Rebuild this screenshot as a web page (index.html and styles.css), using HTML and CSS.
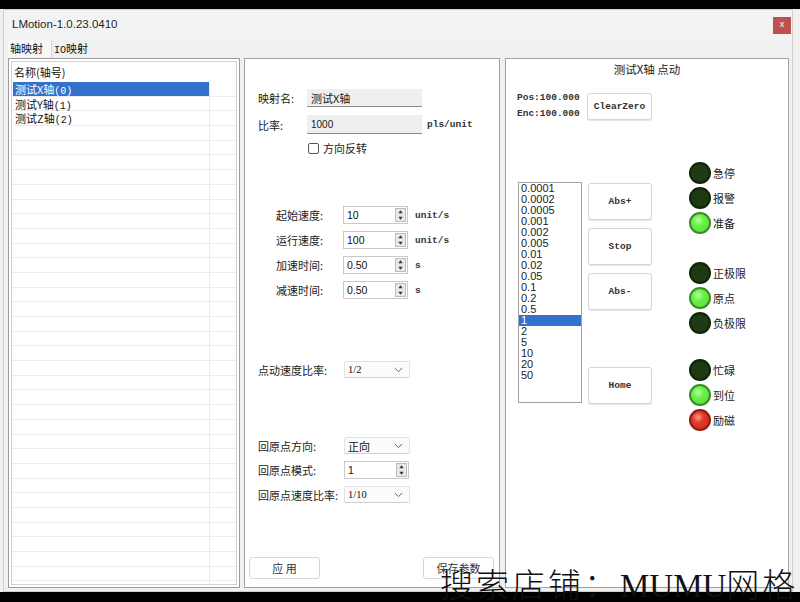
FILE: index.html
```html
<!DOCTYPE html>
<html lang="zh">
<head>
<meta charset="utf-8">
<title>LMotion</title>
<link rel="stylesheet" href="styles.css">
</head>
<body>
<div class="topbar"></div>
<div class="window">
  <div class="frame">
    <div class="titlebar">
      <span class="title">LMotion-1.0.23.0410</span>
      <span class="close">x</span>
    </div>
    <div class="tabs">
      <span class="tab active">轴映射</span>
      <span class="tab"><span class="asc">IO</span>映射</span>
    </div>
    <div class="content">
      <!-- left axis list -->
      <div class="lpanel">
        <div class="lgrid">
          <div class="lhead">名称(轴号)</div>
          <div class="lrow"><div class="c1 sel">测试X轴<span class="asc">(0)</span></div><div class="c2"></div></div>
          <div class="lrow"><div class="c1">测试Y轴<span class="asc">(1)</span></div><div class="c2"></div></div>
          <div class="lrow"><div class="c1">测试Z轴<span class="asc">(2)</span></div><div class="c2"></div></div>
          <div class="lrow"><div class="c1"></div><div class="c2"></div></div>
          <div class="lrow"><div class="c1"></div><div class="c2"></div></div>
          <div class="lrow"><div class="c1"></div><div class="c2"></div></div>
          <div class="lrow"><div class="c1"></div><div class="c2"></div></div>
          <div class="lrow"><div class="c1"></div><div class="c2"></div></div>
          <div class="lrow"><div class="c1"></div><div class="c2"></div></div>
          <div class="lrow"><div class="c1"></div><div class="c2"></div></div>
          <div class="lrow"><div class="c1"></div><div class="c2"></div></div>
          <div class="lrow"><div class="c1"></div><div class="c2"></div></div>
          <div class="lrow"><div class="c1"></div><div class="c2"></div></div>
          <div class="lrow"><div class="c1"></div><div class="c2"></div></div>
          <div class="lrow"><div class="c1"></div><div class="c2"></div></div>
          <div class="lrow"><div class="c1"></div><div class="c2"></div></div>
          <div class="lrow"><div class="c1"></div><div class="c2"></div></div>
          <div class="lrow"><div class="c1"></div><div class="c2"></div></div>
          <div class="lrow"><div class="c1"></div><div class="c2"></div></div>
          <div class="lrow"><div class="c1"></div><div class="c2"></div></div>
          <div class="lrow"><div class="c1"></div><div class="c2"></div></div>
          <div class="lrow"><div class="c1"></div><div class="c2"></div></div>
          <div class="lrow"><div class="c1"></div><div class="c2"></div></div>
          <div class="lrow"><div class="c1"></div><div class="c2"></div></div>
          <div class="lrow"><div class="c1"></div><div class="c2"></div></div>
          <div class="lrow"><div class="c1"></div><div class="c2"></div></div>
          <div class="lrow"><div class="c1"></div><div class="c2"></div></div>
          <div class="lrow"><div class="c1"></div><div class="c2"></div></div>
          <div class="lrow"><div class="c1"></div><div class="c2"></div></div>
          <div class="lrow"><div class="c1"></div><div class="c2"></div></div>
          <div class="lrow"><div class="c1"></div><div class="c2"></div></div>
          <div class="lrow"><div class="c1"></div><div class="c2"></div></div>
          <div class="lrow"><div class="c1"></div><div class="c2"></div></div>
          <div class="lrow"><div class="c1"></div><div class="c2"></div></div>
          <div class="lrow"><div class="c1"></div><div class="c2"></div></div>
        </div>
      </div>

      <!-- middle parameters -->
      <div class="mpanel">
        <div class="frow r-name"><span class="lbl w49">映射名:</span><span class="field">测试X轴</span></div>
        <div class="frow r-ratio"><span class="lbl w49">比率:</span><span class="field num">1000</span><span class="unit">pls/unit</span></div>
        <div class="frow r-check"><span class="cbox"></span><span class="cl">方向反转</span></div>

        <div class="frow r-spd first"><span class="lbl w67">起始速度:</span>
          <span class="spin"><span class="v">10</span><span class="arr"><svg width="9" height="7" viewBox="0 0 9 7"><path d="M4.5 1.5 L7 5 L2 5 Z" fill="#333"/></svg><svg width="9" height="7" viewBox="0 0 9 7"><path d="M2 2 L7 2 L4.5 5.5 Z" fill="#333"/></svg></span></span>
          <span class="unit u2">unit/s</span></div>
        <div class="frow r-spd"><span class="lbl w67">运行速度:</span>
          <span class="spin"><span class="v">100</span><span class="arr"><svg width="9" height="7" viewBox="0 0 9 7"><path d="M4.5 1.5 L7 5 L2 5 Z" fill="#333"/></svg><svg width="9" height="7" viewBox="0 0 9 7"><path d="M2 2 L7 2 L4.5 5.5 Z" fill="#333"/></svg></span></span>
          <span class="unit u2">unit/s</span></div>
        <div class="frow r-spd"><span class="lbl w67">加速时间:</span>
          <span class="spin"><span class="v">0.50</span><span class="arr"><svg width="9" height="7" viewBox="0 0 9 7"><path d="M4.5 1.5 L7 5 L2 5 Z" fill="#333"/></svg><svg width="9" height="7" viewBox="0 0 9 7"><path d="M2 2 L7 2 L4.5 5.5 Z" fill="#333"/></svg></span></span>
          <span class="unit u2">s</span></div>
        <div class="frow r-spd"><span class="lbl w67">减速时间:</span>
          <span class="spin"><span class="v">0.50</span><span class="arr"><svg width="9" height="7" viewBox="0 0 9 7"><path d="M4.5 1.5 L7 5 L2 5 Z" fill="#333"/></svg><svg width="9" height="7" viewBox="0 0 9 7"><path d="M2 2 L7 2 L4.5 5.5 Z" fill="#333"/></svg></span></span>
          <span class="unit u2">s</span></div>

        <div class="frow r-jog"><span class="lbl w86">点动速度比率:</span>
          <span class="combo"><span class="cv">1/2</span><svg width="9" height="6" viewBox="0 0 9 6"><polyline points="0.8,1 4.5,4.6 8.2,1" fill="none" stroke="#666" stroke-width="1"/></svg></span></div>

        <div class="frow r-h1"><span class="lbl w86">回原点方向:</span>
          <span class="combo"><span class="cv cjk">正向</span><svg width="9" height="6" viewBox="0 0 9 6"><polyline points="0.8,1 4.5,4.6 8.2,1" fill="none" stroke="#666" stroke-width="1"/></svg></span></div>
        <div class="frow r-h2"><span class="lbl w86">回原点模式:</span>
          <span class="spin"><span class="v">1</span><span class="arr"><svg width="9" height="7" viewBox="0 0 9 7"><path d="M4.5 1.5 L7 5 L2 5 Z" fill="#333"/></svg><svg width="9" height="7" viewBox="0 0 9 7"><path d="M2 2 L7 2 L4.5 5.5 Z" fill="#333"/></svg></span></span></div>
        <div class="frow r-h3"><span class="lbl w86">回原点速度比率:</span>
          <span class="combo"><span class="cv">1/10</span><svg width="9" height="6" viewBox="0 0 9 6"><polyline points="0.8,1 4.5,4.6 8.2,1" fill="none" stroke="#666" stroke-width="1"/></svg></span></div>

        <div class="btnrow">
          <span class="wbtn">应 用</span>
          <span class="wbtn">保存参数</span>
        </div>
      </div>

      <!-- right jog panel -->
      <div class="rpanel">
        <div class="rtitle">测试X轴 点动</div>
        <div class="posrow">
          <div class="pos"><div>Pos:100.000</div><div>Enc:100.000</div></div>
          <span class="btn clear">ClearZero</span>
        </div>
        <div class="rmain">
          <div class="lst">
            <div>0.0001</div><div>0.0002</div><div>0.0005</div><div>0.001</div><div>0.002</div><div>0.005</div>
            <div>0.01</div><div>0.02</div><div>0.05</div><div>0.1</div><div>0.2</div><div>0.5</div>
            <div class="sel">1</div><div>2</div><div>5</div><div>10</div><div>20</div><div>50</div>
          </div>
          <div class="btncol">
            <span class="btn big">Abs+</span>
            <span class="btn big">Stop</span>
            <span class="btn big">Abs-</span>
            <span class="btn big home">Home</span>
          </div>
          <div class="ledcol">
            <div class="ledgrp">
              <div class="ledrow"><span class="led off"></span><span>急停</span></div>
              <div class="ledrow"><span class="led off"></span><span>报警</span></div>
              <div class="ledrow"><span class="led on"></span><span>准备</span></div>
            </div>
            <div class="ledgrp g2">
              <div class="ledrow"><span class="led off"></span><span>正极限</span></div>
              <div class="ledrow"><span class="led on"></span><span>原点</span></div>
              <div class="ledrow"><span class="led off"></span><span>负极限</span></div>
            </div>
            <div class="ledgrp g3">
              <div class="ledrow"><span class="led off"></span><span>忙碌</span></div>
              <div class="ledrow"><span class="led on"></span><span>到位</span></div>
              <div class="ledrow"><span class="led red"></span><span>励磁</span></div>
            </div>
          </div>
        </div>
      </div>
    </div>
  </div>
</div>
<div class="watermark">搜索店铺：<span class="wl">MUMU</span>网格</div>
</body>
</html>
```

FILE: styles.css
```css
html, body {
  margin: 0;
  padding: 0;
}
body {
  width: 800px;
  height: 602px;
  overflow: hidden;
  background: #000;
  position: relative;
  font-family: "Noto Sans CJK SC", sans-serif;
  font-size: 11px;
  color: #1a1a1a;
}
.topbar {
  height: 9px;
}
.window {
  height: 583px;
  background: #f0f0f0;
  padding-left: 3px;
  box-sizing: border-box;
  width: 800px;
}
.frame {
  box-sizing: border-box;
  width: 790px;
  height: 583px;
  border: 1px solid #cfcfcf;
  display: flex;
  flex-direction: column;
  background: #f0f0f0;
}
.titlebar {
  height: 30px;
  display: flex;
  align-items: flex-start;
  background: #f3f3f3;
}
.title {
  font-family: "Liberation Sans", Arial, sans-serif;
  font-size: 11.5px;
  color: #1e1e1e;
  line-height: 28px;
  padding-left: 8px;
}
.close {
  margin-left: auto;
  margin-top: 7px;
  margin-right: 1px;
  width: 18px;
  height: 17px;
  background: #c0504d;
  color: #fff;
  font-family: "Liberation Sans", Arial, sans-serif;
  font-size: 9px;
  line-height: 15px;
  text-align: center;
}
.tabs {
  height: 18px;
  display: flex;
  padding-left: 4px;
  align-items: stretch;
}
.tab {
  font-size: 11px;
  line-height: 17px;
  padding: 0 8px 0 2px;
  color: #111;
}
.tab.active {
  background: #f7f7f7;
  border-right: 1px solid #d6d6d6;
}
.asc {
  font-family: "Liberation Mono", monospace;
  font-size: 10px;
}
.content {
  height: 530px;
  display: flex;
  padding-left: 4px;
}

/* left list */
.lpanel {
  box-sizing: border-box;
  width: 232px;
  height: 530px;
  border: 1px solid #9c9c9c;
  padding: 2px;
  background: #fff;
}
.lgrid {
  box-sizing: border-box;
  height: 100%;
  border: 1px solid #d2d2d2;
  overflow: hidden;
  background: #fff;
}
.lhead {
  height: 20px;
  line-height: 20px;
  padding-left: 2px;
  font-size: 11px;
  color: #111;
}
.lrow {
  box-sizing: border-box;
  height: 14.7px;
  display: flex;
  border-bottom: 1px solid #ececec;
}
.c1 {
  width: 197px;
  margin-left: 1px;
  border-right: 1px solid #ececec;
  padding-left: 2px;
  box-sizing: border-box;
  font-size: 11px;
  line-height: 14px;
  color: #111;
  white-space: nowrap;
}
.c1.sel {
  background: #3372cc;
  color: #fff;
}
.c2 {
  flex: 1;
}

/* middle panel */
.mpanel {
  box-sizing: border-box;
  width: 256px;
  height: 530px;
  margin-left: 4px;
  border: 1px solid #a3a3a3;
  background: #fff;
  display: flex;
  flex-direction: column;
  padding-bottom: 8px;
}
.frow {
  display: flex;
  align-items: center;
  height: 18px;
  padding-left: 13px;
}
.lbl {
  font-size: 11px;
  color: #1a1a1a;
  white-space: nowrap;
}
.w49 { width: 49px; }
.w67 { width: 67px; }
.w86 { width: 86px; }
.r-name { margin-top: 30px; }
.r-ratio { margin-top: 8px; height: 19px; }
.field {
  box-sizing: border-box;
  width: 115px;
  height: 100%;
  background: #efefef;
  border-bottom: 1px solid #8a8a8a;
  padding-left: 4px;
  display: flex;
  align-items: center;
  font-size: 11px;
}
.field.num {
  font-family: "Liberation Sans", sans-serif;
  font-size: 10px;
}
.unit {
  margin-left: 5px;
  font-family: "Liberation Mono", monospace;
  font-weight: bold;
  font-size: 9.5px;
  color: #333;
}
.unit.u2 { margin-left: 7px; }
.r-check {
  margin-top: 8px;
  height: 12px;
  padding-left: 63px;
}
.cbox {
  box-sizing: border-box;
  width: 11px;
  height: 11px;
  border: 1px solid #555;
  border-radius: 2px;
  background: #fff;
}
.cl {
  margin-left: 4px;
  font-size: 11px;
}
.r-spd { padding-left: 31px; margin-top: 7px; }
.r-spd.first { margin-top: 52px; }
.spin {
  box-sizing: border-box;
  width: 65px;
  height: 100%;
  border: 1px solid #c9c9c9;
  display: flex;
  background: #fff;
}
.spin .v {
  flex: 1;
  padding-left: 3px;
  font-family: "Liberation Sans", sans-serif;
  font-size: 10.5px;
  display: flex;
  align-items: center;
  color: #111;
}
.spin .arr {
  box-sizing: border-box;
  width: 11px;
  margin: 1px 1px 1px 0;
  background: #e9e9e9;
  border: 1px solid #bcbcbc;
  display: flex;
  flex-direction: column;
  justify-content: space-around;
  align-items: center;
}
.spin .arr svg { display: block; }
.r-jog { margin-top: 62px; height: 17px; }
.r-h1 { margin-top: 59px; height: 17px; }
.r-h2 { margin-top: 7px; height: 18px; }
.r-h3 { margin-top: 7px; height: 17px; }
.combo {
  box-sizing: border-box;
  width: 66px;
  height: 100%;
  border: 1px solid #e2e2e2;
  border-bottom-color: #cfcfcf;
  border-radius: 2px;
  background: #fbfbfb;
  display: flex;
  align-items: center;
  justify-content: space-between;
  padding: 0 6px 0 3px;
}
.cv {
  font-family: "Liberation Serif", serif;
  font-size: 10.5px;
  color: #111;
}
.cv.cjk {
  font-family: "Noto Sans CJK SC", sans-serif;
  font-size: 11px;
}
.btnrow {
  margin-top: auto;
  display: flex;
  justify-content: space-between;
  padding: 0 5px 0 4px;
}
.wbtn {
  box-sizing: border-box;
  width: 71px;
  height: 22px;
  border: 1px solid #d8d8d8;
  border-radius: 3px;
  background: #fff;
  display: flex;
  align-items: center;
  justify-content: center;
  font-size: 11px;
  color: #333;
}

/* right panel */
.rpanel {
  box-sizing: border-box;
  width: 284px;
  height: 530px;
  margin-left: 5px;
  border: 1px solid #a3a3a3;
  background: #fff;
  display: flex;
  flex-direction: column;
}
.rtitle {
  margin-top: 3px;
  height: 14px;
  line-height: 14px;
  text-align: center;
  font-size: 11.5px;
  color: #222;
}
.posrow {
  margin-top: 14px;
  height: 32px;
  display: flex;
  padding-left: 11px;
}
.pos {
  width: 70px;
  font-family: "Liberation Mono", monospace;
  font-size: 9.5px;
  font-weight: bold;
  line-height: 16px;
  color: #333;
}
.btn {
  box-sizing: border-box;
  border: 1px solid #d6d6d6;
  border-radius: 3px;
  background: #fff;
  display: flex;
  align-items: center;
  justify-content: center;
  font-family: "Liberation Mono", monospace;
  font-weight: bold;
  font-size: 9.5px;
  color: #333;
  box-shadow: 0 1px 0 #e6e6e6;
}
.btn.clear {
  width: 65px;
  height: 27px;
  margin-top: 3px;
}
.rmain {
  margin-top: 38px;
  display: flex;
  align-items: flex-start;
}
.lst {
  box-sizing: border-box;
  width: 64px;
  height: 221px;
  margin-left: 12px;
  margin-top: 22px;
  border: 1px solid #a3a3a3;
  font-family: "Liberation Sans", sans-serif;
  font-size: 11px;
  line-height: 11px;
  color: #222;
}
.lst div {
  padding-left: 2px;
  height: 11px;
}
.lst .sel {
  background: #3372cc;
  color: #fff;
}
.btncol {
  margin-left: 6px;
  margin-top: 23px;
  display: flex;
  flex-direction: column;
  gap: 8px;
}
.btn.big {
  width: 64px;
  height: 37px;
}
.btn.home {
  margin-top: 49px;
}
.ledcol {
  margin-left: 37px;
  display: flex;
  flex-direction: column;
}
.ledgrp.g2 { margin-top: 25px; }
.ledgrp.g3 { margin-top: 22px; }
.ledrow {
  height: 25px;
  display: flex;
  align-items: center;
  font-size: 11px;
  color: #222;
}
.led {
  box-sizing: border-box;
  width: 22px;
  height: 22px;
  border-radius: 50%;
  margin-right: 2px;
}
.led.off {
  background: #1d3a12;
  border: 2px solid #0f2308;
}
.led.on {
  background: radial-gradient(circle at 40% 35%, #b6ffa0 0, #6cf04a 35%, #55dc34 100%);
  border: 2px solid #3a8a28;
}
.led.red {
  background: radial-gradient(circle at 40% 35%, #ff9a8a 0, #e4382a 35%, #c92a1e 100%);
  border: 2px solid #8e1b12;
}

/* watermark overlay */
.watermark {
  position: absolute;
  left: 440px;
  top: 567px;
  font-family: "Noto Sans CJK SC", sans-serif;
  font-weight: 300;
  font-size: 33px;
  line-height: 33px;
  color: #111;
  letter-spacing: 3px;
  white-space: nowrap;
}
.watermark .wl {
  font-family: "Liberation Serif", serif;
  font-weight: normal;
  letter-spacing: 0;
}
```
